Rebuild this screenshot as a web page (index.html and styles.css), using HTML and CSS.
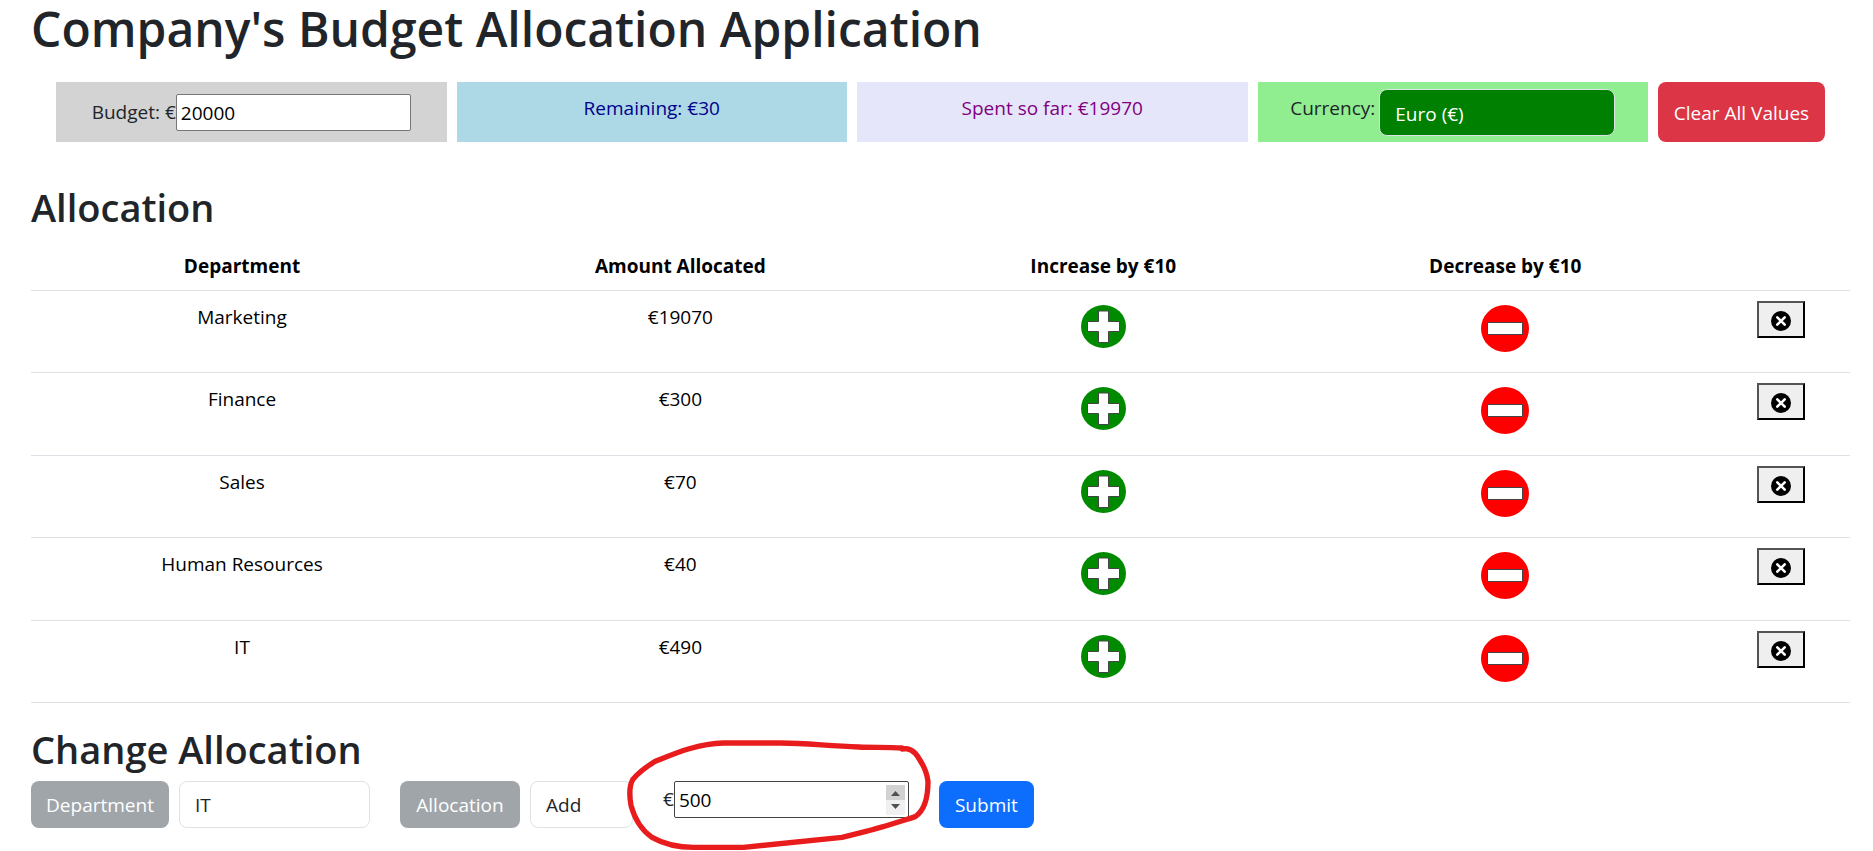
FILE: index.html
```
<!DOCTYPE html>
<html lang="en">
<head>
<meta charset="utf-8">
<title>Company's Budget Allocation Application</title>
<link rel="stylesheet" href="styles.css">
</head>
<body>
<svg class="defs" aria-hidden="true">
  <symbol id="plus" viewBox="0 0 45 43"><ellipse cx="22.5" cy="21.5" rx="22.5" ry="21.5" fill="#008a00"/><path d="M17.5 6h10v10.500h11v10h-11v11h-10v-11h-11v-10h11z" fill="#fff" stroke="#444" stroke-width="1"/></symbol>
  <symbol id="minus" viewBox="0 0 48 47"><ellipse cx="24" cy="23.500" rx="24" ry="23.500" fill="#f00"/><path d="M6.500 17.500h35v12h-35z" fill="#fff" stroke="#444" stroke-width="1"/></symbol>
  <symbol id="cross" viewBox="0 0 20 20"><circle cx="10" cy="10" r="10"/><path d="M6.300 6.300l7.400 7.400M13.700 6.300l-7.400 7.400" stroke="#fff" stroke-width="2.600" stroke-linecap="round"/></symbol>
</svg>
<main class="page">
  <h1 class="title">Company's Budget Allocation Application</h1>
  <section class="summary">
    <div class="card budget"><label for="budget">Budget: €</label><input class="field" id="budget" type="text" value="20000"></div>
    <div class="card remaining">Remaining: €30</div>
    <div class="card spent">Spent so far: €19970</div>
    <div class="card currency"><label for="currency">Currency:</label><select class="select currency-select" id="currency"><option>Euro (€)</option></select></div>
    <button class="btn danger">Clear All Values</button>
  </section>
  <h2 class="heading">Allocation</h2>
  <table class="table">
    <thead><tr><th class="c1">Department</th><th class="c2">Amount Allocated</th><th class="c3">Increase by €10</th><th class="c4">Decrease by €10</th><th></th></tr></thead>
    <tbody>
      <tr><td>Marketing</td><td>€19070</td><td><button class="icon" aria-label="Increase"><svg class="plus"><use href="#plus"/></svg></button></td><td><button class="icon" aria-label="Decrease"><svg class="minus"><use href="#minus"/></svg></button></td><td><button class="delete" aria-label="Delete"><svg class="cross"><use href="#cross"/></svg></button></td></tr>
      <tr><td>Finance</td><td>€300</td><td><button class="icon" aria-label="Increase"><svg class="plus"><use href="#plus"/></svg></button></td><td><button class="icon" aria-label="Decrease"><svg class="minus"><use href="#minus"/></svg></button></td><td><button class="delete" aria-label="Delete"><svg class="cross"><use href="#cross"/></svg></button></td></tr>
      <tr><td>Sales</td><td>€70</td><td><button class="icon" aria-label="Increase"><svg class="plus"><use href="#plus"/></svg></button></td><td><button class="icon" aria-label="Decrease"><svg class="minus"><use href="#minus"/></svg></button></td><td><button class="delete" aria-label="Delete"><svg class="cross"><use href="#cross"/></svg></button></td></tr>
      <tr><td>Human Resources</td><td>€40</td><td><button class="icon" aria-label="Increase"><svg class="plus"><use href="#plus"/></svg></button></td><td><button class="icon" aria-label="Decrease"><svg class="minus"><use href="#minus"/></svg></button></td><td><button class="delete" aria-label="Delete"><svg class="cross"><use href="#cross"/></svg></button></td></tr>
      <tr><td>IT</td><td>€490</td><td><button class="icon" aria-label="Increase"><svg class="plus"><use href="#plus"/></svg></button></td><td><button class="icon" aria-label="Decrease"><svg class="minus"><use href="#minus"/></svg></button></td><td><button class="delete" aria-label="Delete"><svg class="cross"><use href="#cross"/></svg></button></td></tr>
    </tbody>
  </table>
  <h2 class="heading change">Change Allocation</h2>
  <form class="form">
    <label class="tag tag-department" for="department">Department</label>
    <select class="select department" id="department"><option>IT</option></select>
    <label class="tag tag-allocation" for="action">Allocation</label>
    <select class="select action" id="action"><option>Add</option></select>
    <div class="amount">
      <label for="amount">€</label><input class="field" id="amount" type="number" value="500">
      <svg class="spinner" viewBox="0 0 19 30" aria-hidden="true"><path fill="#d2d2d2" d="M0 0h19v15H0z"/><path fill="#f0f0f0" d="M0 15h19v15H0z"/><path fill="#505050" d="M5 11l4.500-5 4.500 5zM5 19h9l-4.500 5z"/></svg>
      <svg class="marker" viewBox="140 55 915 339" aria-hidden="true"><path d="M965 85C920 82 880 84 835 82C740 79 680 70 600 70H430C350 72 280 103 225 125C200 140 175 158 157 180C146 200 148 235 152 257C162 295 185 332 215 353C245 370 290 383 340 383H490L785 353L845 338C900 325 960 305 1005 291C1033 272 1043 230 1043 185C1040 165 1036 150 1025 132C1015 115 1005 90 977 87L965 88"/></svg>
    </div>
    <button class="btn primary" type="button">Submit</button>
  </form>
</main>
</body>
</html>
```
FILE: styles.css
```
* { box-sizing: border-box; }
body { margin: 0; background: #fff; color: #212529; font: 19px/30px "Open Sans", "Noto Sans", sans-serif; }
.defs { position: absolute; width: 0; height: 0; }
.page { min-height: 100vh; padding: 0 23px 20px 31px; }
.title { margin: 0; font-size: 48px; line-height: 58px; font-weight: 600; }
.summary { display: flex; gap: 10px; margin: 24px 25px 0; }
.card { flex: 1 1 0; min-width: 0; height: 60px; display: flex; justify-content: center; padding-top: 11px; }
.budget { background: #d3d3d3; align-items: center; padding-top: 0; }
.remaining { background: #add8e6; color: #00008b; }
.spent { background: #e6e6fa; color: #800080; }
.currency { background: #90ee90; gap: 4px; padding: 0; }
.currency label { margin-top: 11px; }
.field { width: 235px; height: 37px; padding: 2px 4px 0; border: 1px solid #767676; border-radius: 2px; background: #fff; color: #000; font: inherit; }
.select { appearance: none; height: 47px; padding: 2px 15px 0; border: 1px solid #dee2e6; border-radius: 8px; background: #fff; color: #212529; font: inherit; }
.currency-select { width: 236px; margin-top: 7px; background: #008000; color: #fff; }
.btn { border: 0; border-radius: 8px; color: #fff; font: inherit; padding: 2px 0 0; }
.danger { width: 167px; background: #dc3545; }
.heading { margin: 41px 0 0; font-size: 38px; line-height: 48px; font-weight: 600; }
.table { width: 100%; table-layout: fixed; border-collapse: collapse; margin-top: 11px; color: #000; text-align: center; }
.table th { height: 48px; padding: 0; vertical-align: middle; font-weight: 700; border-bottom: 1px solid #dee2e6; }
.table td { height: 82px; padding: 10px 0 0; line-height: 32px; vertical-align: top; border-bottom: 1px solid #dee2e6; }
.table tr:nth-child(even) td { height: 83px; }
.c1 { width: 23.2%; }
.c2 { width: 25%; }
.c3 { width: 21.5%; }
.c4 { width: 22.7%; }
.icon { display: block; margin: 4px auto 0; padding: 0; border: 0; background: none; }
.icon svg, .cross { display: block; }
.plus { width: 45px; height: 43px; }
.minus { width: 48px; height: 47px; }
.delete { display: block; width: 48px; height: 37px; margin: 0 auto; padding: 4px 0 0 12px; background: #efefef; border: 2px outset #000; }
.cross { width: 20px; height: 20px; }
.change { margin-top: 22px; }
.form { display: flex; align-items: flex-start; margin-top: 8px; }
.tag { height: 47px; padding-top: 1px; border-radius: 8px; background: #a0a5aa; color: #fff; line-height: 47px; text-align: center; }
.tag-department { width: 138px; }
.tag-allocation { width: 120px; margin-left: 30px; }
.department { width: 191px; margin-left: 10px; }
.action { width: 103px; margin-left: 10px; }
.amount { position: relative; display: flex; align-items: center; margin-left: 30px; }
#amount { appearance: textfield; border-color: #444; }
#amount::-webkit-inner-spin-button { appearance: none; }
.spinner { position: absolute; right: 4px; top: 4px; width: 19px; height: 30px; pointer-events: none; }
.marker { position: absolute; left: -36px; top: -43px; width: 305px; height: 113px; fill: none; stroke: #e81c1c; stroke-width: 16; stroke-linejoin: round; stroke-linecap: round; pointer-events: none; }
.primary { width: 95px; height: 47px; margin-left: 30px; background: #0d6efd; }
```
